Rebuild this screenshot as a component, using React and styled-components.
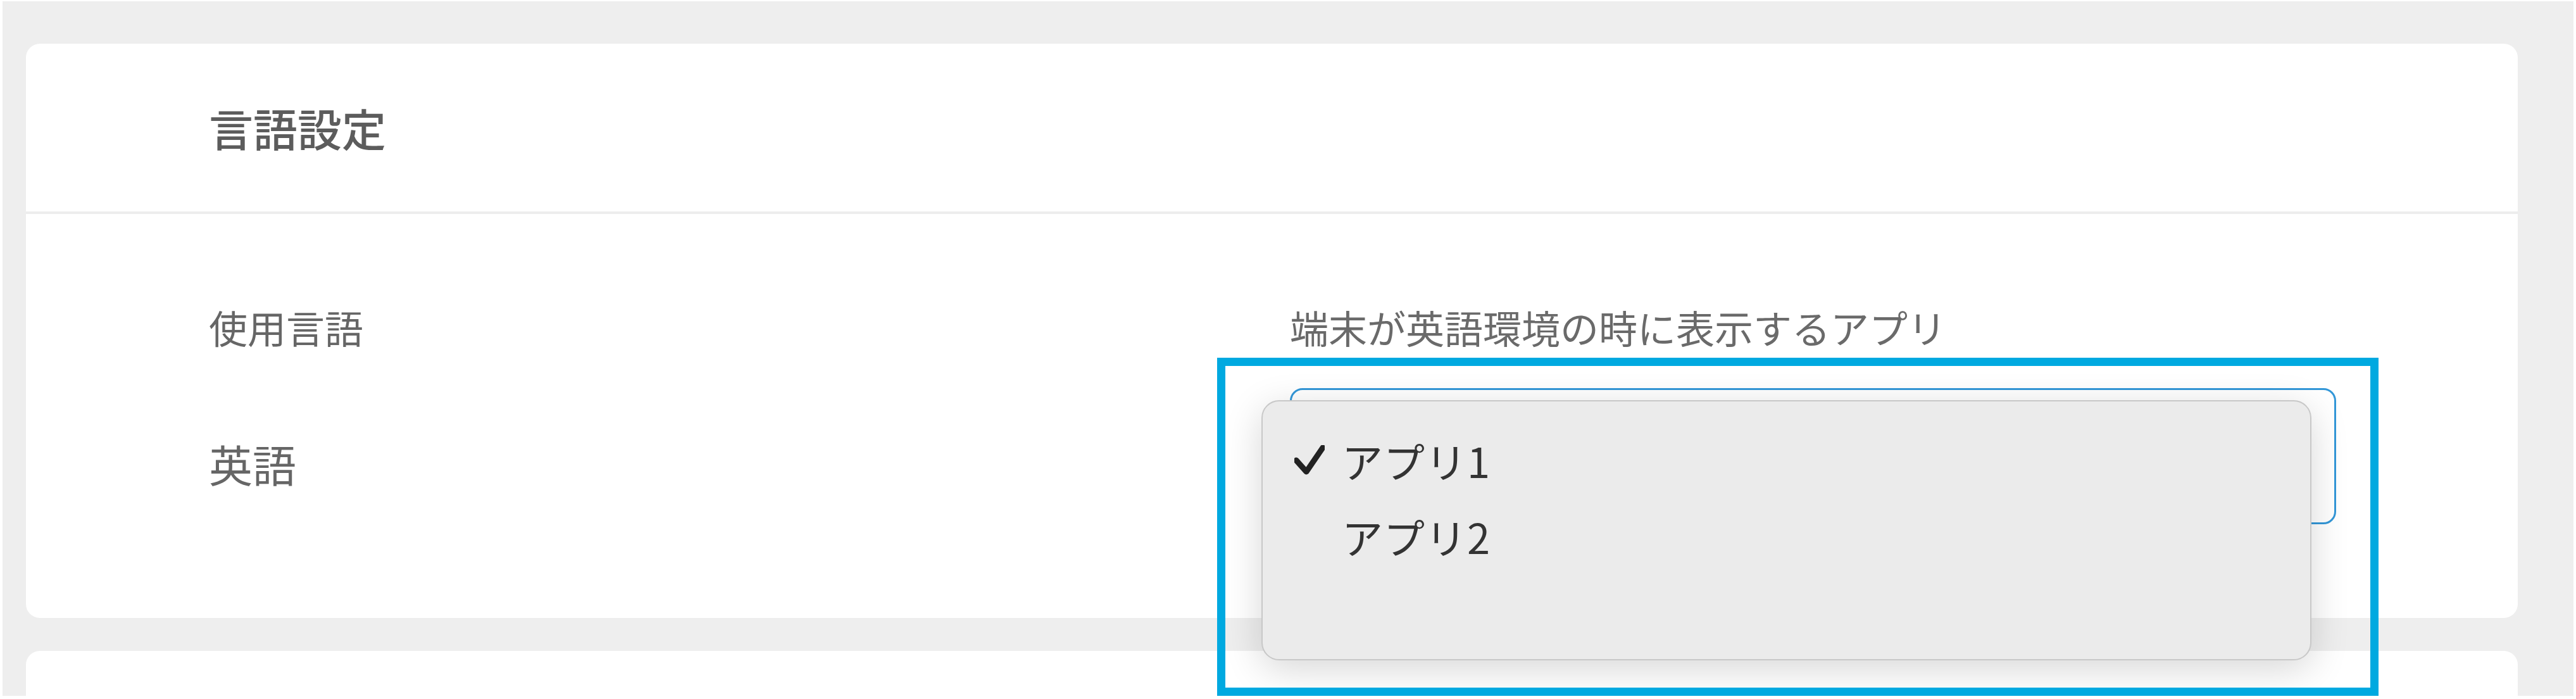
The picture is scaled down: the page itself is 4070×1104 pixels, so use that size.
import React from "react"
import styled, { createGlobalStyle } from "styled-components"

const GlobalStyle = createGlobalStyle`
  html, body {
    margin: 0;
    padding: 0;
    background: #ffffff;
  }
  body {
    font-family: "Noto Sans CJK JP", "Noto Sans", sans-serif;
  }
`

const Page = styled.div`
  margin: 2px 4px 5px 4px;
  height: 1097px;
  box-sizing: border-box;
  padding: 67px 88px 0 37px;
  background: #eeeeee;
  overflow: hidden;
  display: flex;
  flex-direction: column;
  gap: 52px;
`

const Card = styled.section`
  background: #ffffff;
  border-radius: 22px;
  flex-shrink: 0;
  height: ${props => props.height}px;
`

const CardHeader = styled.header`
  height: 265px;
  display: flex;
  align-items: center;
  padding-left: 289px;
  border-bottom: 4px solid #ededed;
`

const Title = styled.h2`
  margin: 0;
  font-size: 70px;
  font-weight: 500;
  color: #5c5c5c;
  line-height: 1;
`

const CardBody = styled.div`
  display: grid;
  grid-template-columns: 1708px 1653px;
  grid-template-rows: 80px 215px;
  row-gap: 56px;
  padding: 139px 0 0 289px;
`

const Label = styled.div`
  font-size: ${props => props.size || 61}px;
  color: #666666;
  line-height: 80px;
  align-self: center;
  margin-top: ${props => props.offset || 0}px;
`

const Hint = styled.div`
  font-size: 61px;
  color: #6a6a6a;
  line-height: 80px;
  white-space: nowrap;
`

const SelectWrap = styled.div`
  position: relative;
`

const SelectBox = styled.div`
  height: 100%;
  box-sizing: border-box;
  border: 3px solid #3397d8;
  border-radius: 20px;
  background: #ffffff;
`

const Menu = styled.ul`
  position: absolute;
  z-index: 5;
  left: -45px;
  top: 19px;
  width: 1659px;
  height: 411px;
  box-sizing: border-box;
  margin: 0;
  padding: 33px 0 0 50px;
  list-style: none;
  background: #ebebeb;
  border: 2px solid #c8c8c8;
  border-radius: 28px;
  box-shadow: 0 14px 60px rgba(0, 0, 0, 0.16);
`

const MenuItem = styled.li`
  height: 120px;
  display: flex;
  align-items: center;
  gap: 27px;
  font-size: 65px;
  color: #333333;
  letter-spacing: 1px;
`

const CheckSlot = styled.span`
  width: 48px;
  height: 48px;
  display: flex;
`

const Highlight = styled.div`
  position: absolute;
  z-index: 6;
  left: -115px;
  top: -48px;
  width: 1835px;
  height: 534px;
  box-sizing: border-box;
  border: 13px solid #00a9e0;
  pointer-events: none;
`

const Check = () => (
  <svg width="48" height="48" viewBox="0 0 48 48">
    <polyline
      points="3,24 19,42 45,4"
      fill="none"
      stroke="#222222"
      strokeWidth="9"
      strokeLinecap="round"
      strokeLinejoin="round"
    />
  </svg>
)

const options = [
  { label: "アプリ1", selected: true },
  { label: "アプリ2", selected: false },
]

const App = () => (
  <>
    <GlobalStyle />
    <Page>
      <Card height={907}>
        <CardHeader>
          <Title>言語設定</Title>
        </CardHeader>
        <CardBody>
          <Label>使用言語</Label>
          <Hint>端末が英語環境の時に表示するアプリ</Hint>
          <Label size={69} offset={22}>英語</Label>
          <SelectWrap>
            <SelectBox />
            <Menu>
              {options.map(o => (
                <MenuItem key={o.label}>
                  <CheckSlot>{o.selected && <Check />}</CheckSlot>
                  {o.label}
                </MenuItem>
              ))}
            </Menu>
            <Highlight />
          </SelectWrap>
        </CardBody>
      </Card>
      <Card height={200} />
    </Page>
  </>
)

export default App
